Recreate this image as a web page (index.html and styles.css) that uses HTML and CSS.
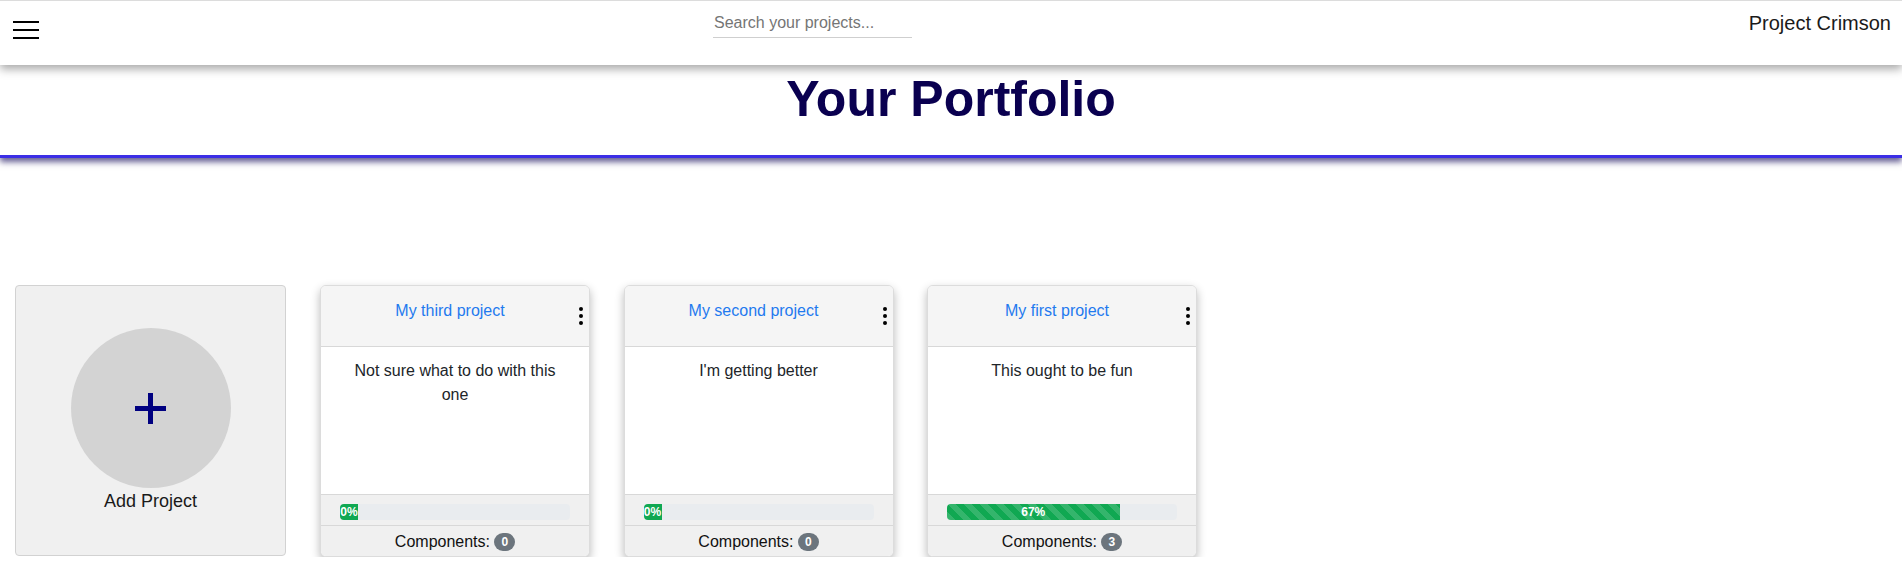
FILE: index.html
```html
<!DOCTYPE html>
<html lang="en">
<head>
<meta charset="utf-8">
<title>Your Portfolio</title>
<link rel="stylesheet" href="styles.css">
</head>
<body>
<nav class="navbar">
  <div class="hamburger"><span></span><span></span><span></span></div>
  <input class="search" type="text" placeholder="Search your projects...">
  <div class="brand">Project Crimson</div>
</nav>
<header class="page-header">
  <h1 class="page-title">Your Portfolio</h1>
</header>
<main class="cards">
  <div class="add-card">
    <div class="add-circle">
      <svg width="31" height="31" viewBox="0 0 31 31"><rect x="13" y="0" width="5" height="31" fill="#000080"/><rect x="0" y="13" width="31" height="5" fill="#000080"/></svg>
    </div>
    <div class="add-label">Add Project</div>
  </div>

  <div class="card">
    <div class="card-header">
      <div class="card-title">My third project</div>
      <div class="dots"><i></i><i></i><i></i></div>
    </div>
    <div class="card-body">Not sure what to do with this one</div>
    <div class="card-progress">
      <div class="progress"><div class="bar" style="width:0%">0%</div></div>
    </div>
    <div class="card-footer">Components: <span class="badge">0</span></div>
  </div>

  <div class="card">
    <div class="card-header">
      <div class="card-title">My second project</div>
      <div class="dots"><i></i><i></i><i></i></div>
    </div>
    <div class="card-body">I'm getting better</div>
    <div class="card-progress">
      <div class="progress"><div class="bar" style="width:0%">0%</div></div>
    </div>
    <div class="card-footer">Components: <span class="badge">0</span></div>
  </div>

  <div class="card">
    <div class="card-header">
      <div class="card-title">My first project</div>
      <div class="dots"><i></i><i></i><i></i></div>
    </div>
    <div class="card-body">This ought to be fun</div>
    <div class="card-progress">
      <div class="progress"><div class="bar striped" style="width:75%">67%</div></div>
    </div>
    <div class="card-footer">Components: <span class="badge">3</span></div>
  </div>
</main>
</body>
</html>
```

FILE: styles.css
```css
html, body {
  margin: 0;
  padding: 0;
  background: #fff;
  font-family: "Liberation Sans", Arial, sans-serif;
  color: #212529;
}

.navbar {
  position: relative;
  z-index: 2;
  display: flex;
  align-items: flex-start;
  height: 64px;
  border-top: 1px solid #dcdcdc;
  background: #fff;
  box-shadow: 0 4px 9px rgba(0, 0, 0, 0.35);
}

.hamburger {
  display: flex;
  flex-direction: column;
  gap: 6px;
  width: 26px;
  margin: 20px 0 0 13px;
}
.hamburger span {
  display: block;
  height: 2px;
  background: #000;
}

.search {
  width: 199px;
  height: 24px;
  margin: 13px 0 0 674px;
  padding: 0 1px 5px;
  box-sizing: border-box;
  border: none;
  border-bottom: 1px solid #cfcfcf;
  outline: none;
  background: transparent;
  font-family: "Liberation Sans", Arial, sans-serif;
  font-size: 16px;
  color: #333;
}
.search::placeholder {
  color: #757575;
}

.brand {
  margin: 11px 11px 0 auto;
  font-size: 20px;
  line-height: 23px;
  color: #1a1a1a;
}

.page-header {
  position: relative;
  z-index: 1;
  background: #fff;
  border-bottom: 3px solid #3b2ee6;
  box-shadow: 0 4px 6px rgba(20, 10, 90, 0.65);
  padding: 5px 0 27px;
}

.page-title {
  margin: 0;
  text-align: center;
  font-size: 50px;
  line-height: 58px;
  font-weight: bold;
  color: #0a0050;
}

.cards {
  display: flex;
  align-items: flex-start;
  padding: 127px 0 0 15px;
}

.add-card {
  width: 271px;
  height: 271px;
  box-sizing: border-box;
  margin-right: 34px;
  background: #f0f0f0;
  border: 1px solid #d2d2d2;
  border-radius: 4px;
  display: flex;
  flex-direction: column;
  align-items: center;
  padding-top: 42px;
}

.add-circle {
  width: 160px;
  height: 160px;
  border-radius: 50%;
  background: #d3d3d3;
  display: flex;
  align-items: center;
  justify-content: center;
}

.add-label {
  margin-top: 3px;
  font-size: 18px;
  line-height: 21px;
  color: #1a1a1a;
}

.card {
  width: 270px;
  height: 272px;
  box-sizing: border-box;
  margin-right: 33.5px;
  background: #fff;
  border: 1px solid #dcdcdc;
  border-radius: 6px;
  box-shadow: 0 4px 10px rgba(0, 0, 0, 0.28);
  display: flex;
  flex-direction: column;
  overflow: hidden;
}

.card-header {
  display: flex;
  align-items: flex-start;
  padding: 13px 6px 21px 0;
  background: #f5f5f5;
  border-bottom: 1px solid #d8d8d8;
}

.card-title {
  flex: 1;
  text-align: center;
  font-size: 16px;
  line-height: 24px;
  color: #1f7aef;
}

.dots {
  display: flex;
  flex-direction: column;
  gap: 3px;
  margin-top: 8px;
}
.dots i {
  display: block;
  width: 4px;
  height: 4px;
  border-radius: 50%;
  background: #000;
}

.card-body {
  flex: 1;
  padding: 12px 20px 0;
  text-align: center;
  font-size: 16px;
  line-height: 24px;
  color: #212529;
}

.card-progress {
  background: #f0f0f0;
  border-top: 1px solid #d8d8d8;
  padding: 9px 19px 5px;
}

.progress {
  display: flex;
  height: 16px;
  background: #e9ecef;
  border-radius: 4px;
  overflow: hidden;
}

.bar {
  min-width: 18px;
  background: #10a852;
  color: #fff;
  font-size: 12px;
  font-weight: bold;
  line-height: 16px;
  text-align: center;
  white-space: nowrap;
}

.bar.striped {
  background-image: linear-gradient(45deg, rgba(255,255,255,.15) 25%, transparent 25%, transparent 50%, rgba(255,255,255,.15) 50%, rgba(255,255,255,.15) 75%, transparent 75%, transparent);
  background-size: 16px 16px;
}

.card-footer {
  background: #f0f0f0;
  border-top: 1px solid #d8d8d8;
  height: 30px;
  text-align: center;
  font-size: 16px;
  line-height: 32px;
  color: #111;
}

.badge {
  display: inline-block;
  padding: 3px 7px;
  font-size: 12px;
  font-weight: bold;
  line-height: 1;
  color: #fff;
  background: #6c757d;
  border-radius: 10px;
  vertical-align: 1px;
}
```
